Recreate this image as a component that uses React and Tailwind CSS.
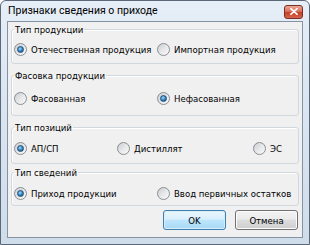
import React from "react";

function Radio({ checked, label, className = "" }) {
  return (
    <div className={"flex items-center shrink-0 " + className}>
      <span className="w-[13px] h-[13px] rounded-full border border-[#8a8e93] bg-[linear-gradient(135deg,#c9ccd1_0%,#e6e7e9_50%,#fafafa_100%)] flex items-center justify-center shrink-0">
        {checked && (
          <span className="w-[7px] h-[7px] rounded-full border border-[#1d4f78] bg-[radial-gradient(circle_at_40%_35%,#a9dcf8_0%,#3f8fcc_45%,#0f3c66_100%)]" />
        )}
      </span>
      <span className="ml-[4px] text-[9.5px] leading-[13px] text-black whitespace-nowrap">{label}</span>
    </div>
  );
}

function Group({ title, h, inner, className = "", children }) {
  return (
    <fieldset className={"border border-[#d0d7de] rounded-[3px] px-[2px] shadow-[inset_1px_1px_0_#ffffff] " + h + " " + className}>
      <legend className="px-[1px] text-[9.5px] leading-[13px] text-black">{title}</legend>
      <div className={"flex items-center " + inner}>{children}</div>
    </fieldset>
  );
}

export default function App() {
  return (
    <div
      className="w-[310px] h-[245px] flex flex-col border border-[#5b6878] rounded-t-[6px] bg-[linear-gradient(180deg,#e6eef7_0%,#dbe6f2_40%,#cfdcea_100%)] px-[6px] pb-[6px]"
      style={{ fontFamily: '"DejaVu Sans Condensed", Tahoma, "Liberation Sans", sans-serif' }}
    >
      <div className="h-[20px] flex items-center justify-between shrink-0">
        <span
          className="pl-[1px] text-[10.5px] leading-[14px] text-black"
          style={{ fontFamily: 'Roboto, "Liberation Sans", sans-serif' }}
        >
          Признаки сведения о приходе
        </span>
        <div className="w-[19px] h-[14px] mt-[1px] rounded-[3px] border border-[#7a2f24] bg-[linear-gradient(180deg,#eaa898_0%,#d9705d_45%,#c53f27_55%,#d6664e_100%)] flex items-center justify-center">
          <svg width="8" height="7" viewBox="0 0 8 7">
            <path d="M1 0.8 L7 6.2 M7 0.8 L1 6.2" stroke="#ffffff" strokeWidth="1.7" strokeLinecap="round" />
          </svg>
        </div>
      </div>
      <div className="flex-1 border border-[#8593a3] bg-[#f0f0f0] px-[3px] pt-[1px] flex flex-col">
        <Group title="Тип продукции" h="h-[41px]" inner="h-[27px]">
          <Radio checked label="Отечественная продукция" className="w-[143px]" />
          <Radio label="Импортная продукция" />
        </Group>
        <Group title="Фасовка продукции" h="h-[47px]" inner="h-[33px]" className="mt-[5px]">
          <Radio label="Фасованная" className="w-[143px]" />
          <Radio checked label="Нефасованная" />
        </Group>
        <Group title="Тип позиций" h="h-[43px]" inner="h-[29px]" className="mt-[5px]">
          <Radio checked label="АП/СП" className="w-[103px]" />
          <Radio label="Дистиллят" className="w-[136px]" />
          <Radio label="ЭС" />
        </Group>
        <Group title="Тип сведений" h="h-[40px]" inner="h-[29px]" className="mt-[2px]">
          <Radio checked label="Приход продукции" className="w-[143px]" />
          <Radio label="Ввод первичных остатков" />
        </Group>
        <div className="flex justify-end gap-[9px] mt-[4px] pr-[1px]">
          <button className="w-[63px] h-[20px] rounded-[3px] border border-[#3c7fb1] bg-[linear-gradient(180deg,#eaf6fd_0%,#d9f0fc_45%,#bee6fd_50%,#a7d9f5_100%)] shadow-[inset_0_0_0_1px_#d8eefa] text-[9.5px] leading-[13px] text-black">
            OK
          </button>
          <button className="w-[63px] h-[20px] rounded-[3px] border border-[#707070] bg-[linear-gradient(180deg,#f2f2f2_0%,#ebebeb_45%,#dddddd_50%,#cfcfcf_100%)] shadow-[inset_0_0_0_1px_#fcfcfc] text-[9.5px] leading-[13px] text-black">
            Отмена
          </button>
        </div>
      </div>
    </div>
  );
}
